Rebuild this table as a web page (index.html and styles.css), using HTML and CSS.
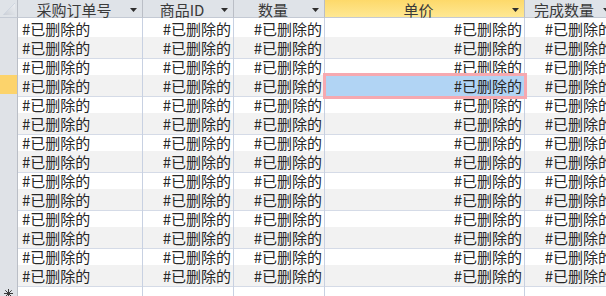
FILE: index.html
```html
<!DOCTYPE html>
<html lang="zh-CN">
<head>
<meta charset="utf-8">
<title>采购订单明细</title>
<link rel="stylesheet" href="styles.css">
</head>
<body>
<div class="sheet">
  <div class="row head">
    <div class="cell corner"><svg width="17" height="17" viewBox="0 0 17 17"><defs><linearGradient id="cg" x1="0" y1="1" x2="1" y2="0"><stop offset="0" stop-color="#c9ced6"/><stop offset="1" stop-color="#eef0f3"/></linearGradient></defs><polygon points="3,15 15,15 15,3" fill="url(#cg)"/><line x1="3" y1="15" x2="15" y2="3" stroke="#cfd6e0" stroke-width="1"/></svg></div>
    <div class="cell hcell"><span class="htext">采购订单号</span><svg class="arrow" width="7" height="4" viewBox="0 0 7 4"><polygon points="0,0 7,0 3.5,4" fill="#2e2e2e"/></svg></div>
    <div class="cell hcell"><span class="htext">商品ID</span><svg class="arrow" width="7" height="4" viewBox="0 0 7 4"><polygon points="0,0 7,0 3.5,4" fill="#2e2e2e"/></svg></div>
    <div class="cell hcell"><span class="htext">数量</span><svg class="arrow" width="7" height="4" viewBox="0 0 7 4"><polygon points="0,0 7,0 3.5,4" fill="#2e2e2e"/></svg></div>
    <div class="cell hcell hcur"><span class="htext">单价</span><svg class="arrow" width="7" height="4" viewBox="0 0 7 4"><polygon points="0,0 7,0 3.5,4" fill="#2e2e2e"/></svg></div>
    <div class="cell hcell"><span class="htext">完成数量</span><svg class="arrow" width="7" height="4" viewBox="0 0 7 4"><polygon points="0,0 7,0 3.5,4" fill="#2e2e2e"/></svg></div>
  </div>

  <div class="row"><div class="cell rs"></div><div class="cell tl">#已删除的</div><div class="cell tr">#已删除的</div><div class="cell tr">#已删除的</div><div class="cell tr">#已删除的</div><div class="cell tr">#已删除的</div></div>
  <div class="row alt"><div class="cell rs"></div><div class="cell tl">#已删除的</div><div class="cell tr">#已删除的</div><div class="cell tr">#已删除的</div><div class="cell tr">#已删除的</div><div class="cell tr">#已删除的</div></div>
  <div class="row"><div class="cell rs"></div><div class="cell tl">#已删除的</div><div class="cell tr">#已删除的</div><div class="cell tr">#已删除的</div><div class="cell tr">#已删除的</div><div class="cell tr">#已删除的</div></div>
  <div class="row alt"><div class="cell rs rs-cur"></div><div class="cell tl">#已删除的</div><div class="cell tr">#已删除的</div><div class="cell tr">#已删除的</div><div class="cell tr selected">#已删除的</div><div class="cell tr">#已删除的</div></div>
  <div class="row"><div class="cell rs"></div><div class="cell tl">#已删除的</div><div class="cell tr">#已删除的</div><div class="cell tr">#已删除的</div><div class="cell tr">#已删除的</div><div class="cell tr">#已删除的</div></div>
  <div class="row alt"><div class="cell rs"></div><div class="cell tl">#已删除的</div><div class="cell tr">#已删除的</div><div class="cell tr">#已删除的</div><div class="cell tr">#已删除的</div><div class="cell tr">#已删除的</div></div>
  <div class="row"><div class="cell rs"></div><div class="cell tl">#已删除的</div><div class="cell tr">#已删除的</div><div class="cell tr">#已删除的</div><div class="cell tr">#已删除的</div><div class="cell tr">#已删除的</div></div>
  <div class="row alt"><div class="cell rs"></div><div class="cell tl">#已删除的</div><div class="cell tr">#已删除的</div><div class="cell tr">#已删除的</div><div class="cell tr">#已删除的</div><div class="cell tr">#已删除的</div></div>
  <div class="row"><div class="cell rs"></div><div class="cell tl">#已删除的</div><div class="cell tr">#已删除的</div><div class="cell tr">#已删除的</div><div class="cell tr">#已删除的</div><div class="cell tr">#已删除的</div></div>
  <div class="row alt"><div class="cell rs"></div><div class="cell tl">#已删除的</div><div class="cell tr">#已删除的</div><div class="cell tr">#已删除的</div><div class="cell tr">#已删除的</div><div class="cell tr">#已删除的</div></div>
  <div class="row"><div class="cell rs"></div><div class="cell tl">#已删除的</div><div class="cell tr">#已删除的</div><div class="cell tr">#已删除的</div><div class="cell tr">#已删除的</div><div class="cell tr">#已删除的</div></div>
  <div class="row alt"><div class="cell rs"></div><div class="cell tl">#已删除的</div><div class="cell tr">#已删除的</div><div class="cell tr">#已删除的</div><div class="cell tr">#已删除的</div><div class="cell tr">#已删除的</div></div>
  <div class="row"><div class="cell rs"></div><div class="cell tl">#已删除的</div><div class="cell tr">#已删除的</div><div class="cell tr">#已删除的</div><div class="cell tr">#已删除的</div><div class="cell tr">#已删除的</div></div>
  <div class="row alt"><div class="cell rs"></div><div class="cell tl">#已删除的</div><div class="cell tr">#已删除的</div><div class="cell tr">#已删除的</div><div class="cell tr">#已删除的</div><div class="cell tr">#已删除的</div></div>

  <div class="row newrow"><div class="cell rs"><svg class="star" width="9" height="9" viewBox="0 0 9 9"><g stroke="#3a3a3a" stroke-width="1"><line x1="4.5" y1="0" x2="4.5" y2="9"/><line x1="0" y1="4.5" x2="9" y2="4.5"/><line x1="1.3" y1="1.3" x2="7.7" y2="7.7"/><line x1="7.7" y1="1.3" x2="1.3" y2="7.7"/></g></svg></div><div class="cell tl"></div><div class="cell tr"></div><div class="cell tr"></div><div class="cell tr"></div><div class="cell tr"></div></div>
</div>
</body>
</html>
```

FILE: styles.css
```css
html, body {
  margin: 0;
  padding: 0;
  background: #ffffff;
  overflow: hidden;
}

body {
  font-family: "Noto Sans CJK SC", "Noto Sans", sans-serif;
}

.sheet {
  width: 616px;
}

.row {
  display: grid;
  grid-template-columns: 18px 125px 91px 91px 200px 91px;
  height: 19px;
}

.cell {
  box-sizing: border-box;
  border-right: 1px solid #c8d1e2;
  border-bottom: 1px solid #d5dbe7;
  font-size: 15px;
  line-height: 21px;
  color: #262626;
  white-space: nowrap;
}

.alt .cell {
  background: #f2f2f2;
}

.tl {
  text-align: left;
  padding-left: 4px;
}

.tr {
  text-align: right;
  padding-right: 2px;
}

/* header */
.head {
  height: 18px;
  background: #dfe3e8;
}

.head .cell {
  border-right-color: #babec6;
  border-bottom-color: #c4cad4;
  line-height: 19px;
}

.corner {
  display: flex;
  align-items: flex-start;
}

.corner svg {
  display: block;
}

.hcell {
  display: flex;
  align-items: center;
  color: #3a3a3a;
}

.htext {
  flex: 1;
  text-align: center;
  height: 17px;
}

.arrow {
  flex: none;
  margin-right: 5px;
  margin-top: 2px;
}

.hcur {
  background: linear-gradient(#fdd96a, #fee894);
}

/* row selectors */
.rs,
.alt .rs {
  background: #dfe2e7;
  border-right-color: #babec6;
  border-bottom-color: #c6cbd3;
}

.alt .rs-cur {
  background: #fcd36b;
}

/* selected cell */
.alt .selected {
  position: relative;
  z-index: 1;
  background: #b1d4f4;
  outline: 3px solid #f6a9b0;
  outline-offset: -1px;
}

.star {
  display: block;
  margin: 5px 0 0 4px;
}
```
